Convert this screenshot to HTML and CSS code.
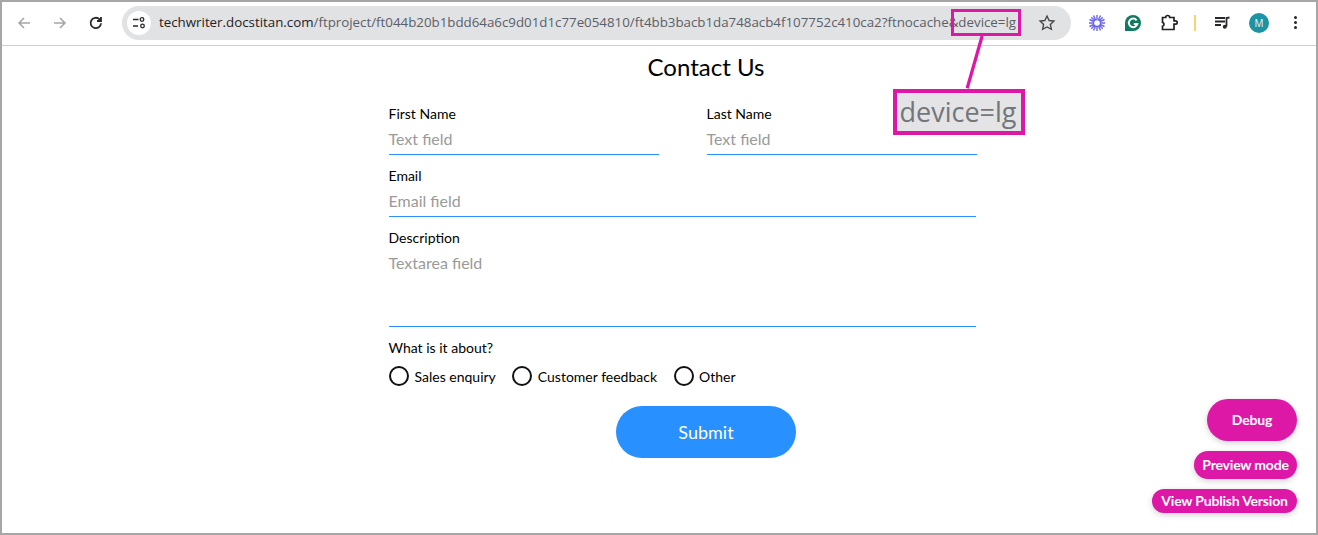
FILE: index.html
```html
<!DOCTYPE html>
<html lang="en">
<head>
<meta charset="utf-8">
<title>Contact Us</title>
<link rel="stylesheet" href="styles.css">
</head>
<body>
<div class="window">
  <header class="toolbar">
    <div class="nav">
      <svg class="icon" viewBox="0 0 16 16"><path class="dim" d="M14 8H3M8 3 3 8l5 5"/></svg>
      <svg class="icon" viewBox="0 0 16 16"><path class="dim" d="M2 8h11M8 3l5 5-5 5"/></svg>
      <svg class="icon" viewBox="0 0 16 16"><path class="dark" d="M13 8.200A5.200 5.200 0 1 1 11.600 4.400L13 5.800M13 2v4H9"/></svg>
    </div>
    <div class="omnibox">
      <span class="site-chip"><svg viewBox="0 0 16 16" width="16" height="16"><path class="dark thin" d="M2 4.500h5.500M2 11h5"/><circle class="dark thin" cx="11" cy="4.500" r="1.800"/><circle class="dark thin" cx="11.500" cy="11" r="1.800"/></svg></span>
      <span class="url"><span class="host">techwriter.docstitan.com</span>/ftproject/ft044b20b1bdd64a6c9d01d1c77e054810/ft4bb3bacb1da748acb4f107752c410ca2?ftnocache&amp;device=lg</span>
      <svg class="star" viewBox="0 0 16 16"><path class="star-line" d="m8 1.800 1.900 4 4.300.5-3.200 3 .9 4.300L8 11.500l-3.900 2.100.9-4.300-3.200-3 4.300-.5z"/></svg>
    </div>
    <div class="extensions">
      <svg class="ext" viewBox="0 0 18 18"><g class="burst"><path d="M9 1v16M1 9h16M3.300 3.300l11.400 11.400M14.700 3.300 3.300 14.700M5.500 1.500l7 15M12.500 1.500l-7 15M1.500 5.500l15 7M16.500 5.500l-15 7"/></g><circle class="burst-hole" cx="9" cy="9" r="2.800"/></svg>
      <svg class="ext" viewBox="0 0 18 18"><circle class="gram-bg" cx="9" cy="9" r="8"/><path class="gram-bg" d="M1 9v8h8z"/><path class="gram-g" d="M12.600 6.300A4.300 4.300 0 1 0 13.300 10H9.800"/></svg>
      <svg class="ext" viewBox="0 0 18 18"><path class="puzzle" d="M2.500 3.500h3.200a2 2 0 0 1 4 0H14v3.300h1.500a1.700 1.700 0 0 1 0 3.400H14V15.500H2.500v-3.200a2 2 0 0 0 0-3.900z"/></svg>
      <span class="tick"></span>
      <svg class="ext" viewBox="0 0 18 18"><path class="dark" d="M2 4h10M2 7.500h10M2 11h6"/><path class="dark" d="M13.500 12.500V4l3-.5"/><circle class="note" cx="11.800" cy="12.800" r="2"/></svg>
      <span class="avatar">M</span>
      <span class="kebab"><i></i><i></i><i></i></span>
    </div>
  </header>

  <main class="page">
    <form class="form">
      <h1 class="title">Contact Us</h1>
      <div class="fields">
        <div class="row">
          <label class="field"><span class="label">First Name</span><span class="input">Text field</span></label>
          <label class="field"><span class="label">Last Name</span><span class="input">Text field</span></label>
        </div>
        <label class="field"><span class="label">Email</span><span class="input">Email field</span></label>
        <label class="field"><span class="label">Description</span><span class="input textarea">Textarea field</span></label>
        <div class="field">
          <span class="label">What is it about?</span>
          <div class="radios">
            <span class="radio"><i></i>Sales enquiry</span>
            <span class="radio"><i></i>Customer feedback</span>
            <span class="radio"><i></i>Other</span>
          </div>
        </div>
      </div>
      <button class="submit" type="button">Submit</button>
    </form>
  </main>

  <div class="dev-actions">
    <span class="pill debug">Debug</span>
    <span class="pill preview">Preview mode</span>
    <span class="pill publish">View Publish Version</span>
  </div>

  <div class="callout-source"></div>
  <svg class="callout-line" viewBox="0 0 40 60"><path d="M18 0 2 56"/></svg>
  <div class="callout-zoom">device=lg</div>
</div>
</body>
</html>
```
FILE: styles.css
```css
* { box-sizing: border-box; }
html, body { margin: 0; padding: 0; }
body { background: #fff; font-family: "Lato", sans-serif; color: #000; }
.window {
  position: relative;
  width: 1318px;
  height: 535px;
  border: 2px solid #a6a6a6;
  overflow: hidden;
}
.toolbar {
  display: flex;
  align-items: center;
  height: 44px;
  border-bottom: 1px solid #cfcfcf;
  padding-left: 14px;
}
.nav { display: flex; gap: 20px; width: 106px; margin-top: -2px; }
.icon { width: 16px; height: 16px; fill: none; }
.dim { stroke: #a3a5a8; stroke-width: 1.500; fill: none; }
.dark { stroke: #26282b; stroke-width: 1.800; fill: none; }
.thin { stroke-width: 1.300; }
.omnibox {
  display: flex;
  align-items: center;
  width: 949px;
  height: 34px;
  border-radius: 17px;
  background: #e1e2e4;
  padding-left: 5px;
  margin-top: -2px;
}
.site-chip {
  display: flex;
  align-items: center;
  justify-content: center;
  width: 24px;
  height: 24px;
  border-radius: 50%;
  background: #fff;
}
.url {
  margin-left: 8px;
  width: 860px;
  padding-bottom: 1px;
  overflow: hidden;
  white-space: nowrap;
  font-family: "Open Sans", sans-serif;
  font-size: 13.320px;
  color: #5b6068;
}
.host { color: #1f2124; }
.star { width: 18px; height: 18px; margin-left: 19px; }
.star-line { stroke: #45474a; stroke-width: 1.200; fill: none; }
.extensions { display: flex; align-items: center; margin-left: 17px; height: 24px; margin-top: -2px; }
.ext { width: 18px; height: 18px; flex: none; margin-right: 18px; }
.burst path { stroke: #6a64f2; stroke-width: 1.400; fill: none; }
.burst-hole { fill: #fff; }
.gram-bg { fill: #0f7a5f; }
.gram-g { stroke: #fff; stroke-width: 2; fill: none; }
.puzzle { stroke: #1f2124; stroke-width: 1.700; fill: none; }
.note { fill: #26282b; }
.tick { width: 2px; height: 16px; background: #f8d469; margin: 0 17px 0 -2px; }
.avatar {
  display: flex;
  align-items: center;
  justify-content: center;
  width: 20px;
  height: 20px;
  border-radius: 50%;
  background: #1d94a4;
  color: #e9f6f8;
  font-family: "Open Sans", sans-serif;
  font-size: 10px;
}
.kebab { display: flex; flex-direction: column; gap: 2px; margin-left: 25px; }
.kebab i { width: 3px; height: 3px; border-radius: 50%; background: #26282b; }

.page { padding-left: 387px; }
.form { width: 634px; display: flex; flex-direction: column; align-items: center; }
.title {
  margin: 5px 0 0;
  font-size: 24px;
  line-height: 32px;
  font-weight: 400;
  color: #000;
}
.fields { width: 100%; padding-right: 47px; margin-top: 20px; display: flex; flex-direction: column; gap: 10px; }
.row { display: grid; grid-template-columns: 270px 270px; column-gap: 48px; }
.field { display: flex; flex-direction: column; }
.label { font-size: 14px; line-height: 20px; height: 20px; padding-top: 1px; text-indent: -0.500px; }
.input {
  display: block;
  height: 32px;
  padding-top: 6px;
  font-size: 16px;
  line-height: 20px;
  color: #9a9a9a;
  border-bottom: 1px solid #2a90fe;
  text-indent: -0.500px;
}
.textarea { height: 80px; }
.radios { display: flex; gap: 16.500px; margin-top: 10px; }
.radio { display: flex; align-items: center; gap: 5.500px; font-size: 14px; line-height: 20px; }
.radio i {
  width: 20px;
  height: 20px;
  border: 2px solid #111;
  border-radius: 50%;
  transform: translateY(-1px);
}
.submit {
  width: 180px;
  height: 52px;
  margin-top: 19px;
  border: 0;
  border-radius: 26px;
  background: #2890ff;
  color: #fff;
  font-family: "Lato", sans-serif;
  font-size: 18px;
}

.dev-actions {
  position: absolute;
  right: 19px;
  bottom: 20px;
  display: flex;
  flex-direction: column;
  align-items: flex-end;
  gap: 10px;
}
.pill {
  display: flex;
  align-items: center;
  justify-content: center;
  padding-bottom: 2px;
  background: #dd17a6;
  color: #fff;
  font-size: 14px;
  font-weight: 700;
  letter-spacing: -0.200px;
  box-shadow: 0 2px 6px rgba(0, 0, 0, 0.18);
}
.debug { width: 90px; height: 42px; border-radius: 21px; }
.preview { width: 103px; height: 28px; border-radius: 14px; }
.publish { width: 145px; height: 24px; border-radius: 12px; }

.callout-source {
  position: absolute;
  left: 949px;
  top: 7px;
  width: 70px;
  height: 27px;
  border: 3px solid #dd17a6;
}
.callout-line {
  position: absolute;
  left: 962px;
  top: 34px;
  width: 40px;
  height: 56px;
}
.callout-line path { stroke: #dd17a6; stroke-width: 3.500; fill: none; }
.callout-zoom {
  position: absolute;
  left: 891px;
  top: 87px;
  width: 132px;
  height: 46px;
  padding-right: 2px;
  border: 4px solid #dd17a6;
  background: #e4e4e6;
  color: #73767a;
  font-family: "Open Sans", sans-serif;
  font-size: 27px;
  line-height: 38px;
  text-align: center;
  white-space: nowrap;
}
```
